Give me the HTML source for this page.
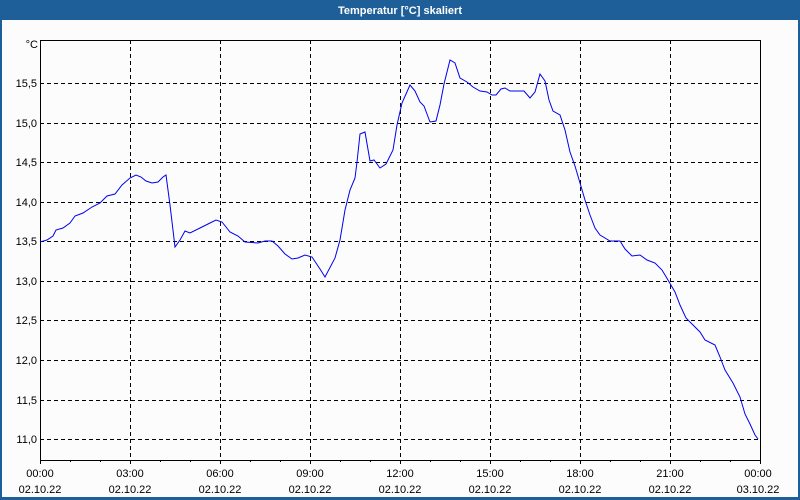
<!DOCTYPE html>
<html><head><meta charset="utf-8"><style>
body{margin:0;width:800px;height:500px;overflow:hidden;background:#fcfcfc;font-family:"Liberation Sans",Tahoma,sans-serif}
</style></head><body>
<svg width="800" height="500" xmlns="http://www.w3.org/2000/svg" style="display:block">
<rect x="0" y="0" width="800" height="500" fill="#1f5f99"/>
<rect x="2" y="20" width="796" height="477" fill="#fcfcfc"/>
<text x="400" y="14" fill="#fff" font-size="11" font-weight="bold" text-anchor="middle">Temperatur [°C] skaliert</text>
<g stroke="#000" stroke-dasharray="4,3" stroke-width="1">
<line x1="40" x2="760" y1="83.5" y2="83.5"/><line x1="40" x2="760" y1="123.5" y2="123.5"/>
<line x1="40" x2="760" y1="162.5" y2="162.5"/><line x1="40" x2="760" y1="202.5" y2="202.5"/>
<line x1="40" x2="760" y1="241.5" y2="241.5"/><line x1="40" x2="760" y1="281.5" y2="281.5"/>
<line x1="40" x2="760" y1="320.5" y2="320.5"/><line x1="40" x2="760" y1="360.5" y2="360.5"/>
<line x1="40" x2="760" y1="400.5" y2="400.5"/><line x1="40" x2="760" y1="439.5" y2="439.5"/>
<line y1="40" y2="460" x1="130.5" x2="130.5"/><line y1="40" y2="460" x1="220.5" x2="220.5"/>
<line y1="40" y2="460" x1="310.5" x2="310.5"/><line y1="40" y2="460" x1="400.5" x2="400.5"/>
<line y1="40" y2="460" x1="490.5" x2="490.5"/><line y1="40" y2="460" x1="580.5" x2="580.5"/>
<line y1="40" y2="460" x1="670.5" x2="670.5"/>
</g>
<rect x="40.5" y="40.5" width="720" height="420" fill="none" stroke="#000"/>
<g stroke="#000">
<path d="M40.5 460v4M70.5 460v2M100.5 460v2M130.5 460v4M160.5 460v2M190.5 460v2M220.5 460v4M250.5 460v2M280.5 460v2M310.5 460v4M340.5 460v2M370.5 460v2M400.5 460v4M430.5 460v2M460.5 460v2M490.5 460v4M520.5 460v2M550.5 460v2M580.5 460v4M610.5 460v2M640.5 460v2M670.5 460v4M700.5 460v2M730.5 460v2M760.5 460v4"/>
</g>
<polyline fill="none" stroke="#0000ee" stroke-width="1" points="40,242 47,240 53,236 56,230 63,228 70,223 75,216 83,213 92,207 100,203 107,196 115,194 122,185 130,178 136,175 141,177 146,181 152,183 158,182 163,177 166,175 170,205 175,247 180,240 185,231 190,233 200,228 210,223 216,220 222,222 230,232 238,236 245,242 258,243 265,241 272,241 278,246 285,254 292,259 298,258 305,255 312,257 320,269 325,277 335,258 340,240 345,210 350,190 355,178 357,162 360,134 365,132 370,161 374,160 380,168 386,164 393,150 397,125 402,103 410,85 415,91 420,102 424,106 430,122 436,121 440,105 444,84 450,60 455,63 460,78 467,82 473,87 480,91 487,92 492,95 496,95 501,89 505,88 510,91 524,91 530,98 535,92 540,74 545,81 549,100 553,111 560,115 565,130 570,152 575,166 580,183 585,200 590,215 595,228 600,235 610,241 620,241 625,249 632,256 640,255 647,260 655,263 662,270 668,280 675,292 680,305 686,318 693,325 700,332 705,340 715,345 720,357 725,370 733,383 740,397 745,414 750,424 755,435 758,439"/>
<g font-size="11" fill="#000" text-anchor="end">
<text x="38" y="48">°C</text>
<text x="37" y="87">15,5</text><text x="37" y="127">15,0</text><text x="37" y="166">14,5</text>
<text x="37" y="206">14,0</text><text x="37" y="245">13,5</text><text x="37" y="285">13,0</text>
<text x="37" y="324">12,5</text><text x="37" y="364">12,0</text><text x="37" y="404">11,5</text>
<text x="37" y="443">11,0</text>
</g>
<g font-size="11" fill="#000" text-anchor="middle">
<text x="40" y="477">00:00</text><text x="40" y="493">02.10.22</text>
<text x="130" y="477">03:00</text><text x="130" y="493">02.10.22</text>
<text x="220" y="477">06:00</text><text x="220" y="493">02.10.22</text>
<text x="310" y="477">09:00</text><text x="310" y="493">02.10.22</text>
<text x="400" y="477">12:00</text><text x="400" y="493">02.10.22</text>
<text x="490" y="477">15:00</text><text x="490" y="493">02.10.22</text>
<text x="580" y="477">18:00</text><text x="580" y="493">02.10.22</text>
<text x="670" y="477">21:00</text><text x="670" y="493">02.10.22</text>
<text x="758" y="477">00:00</text><text x="758" y="493">03.10.22</text>
</g>
</svg>
</body></html>
